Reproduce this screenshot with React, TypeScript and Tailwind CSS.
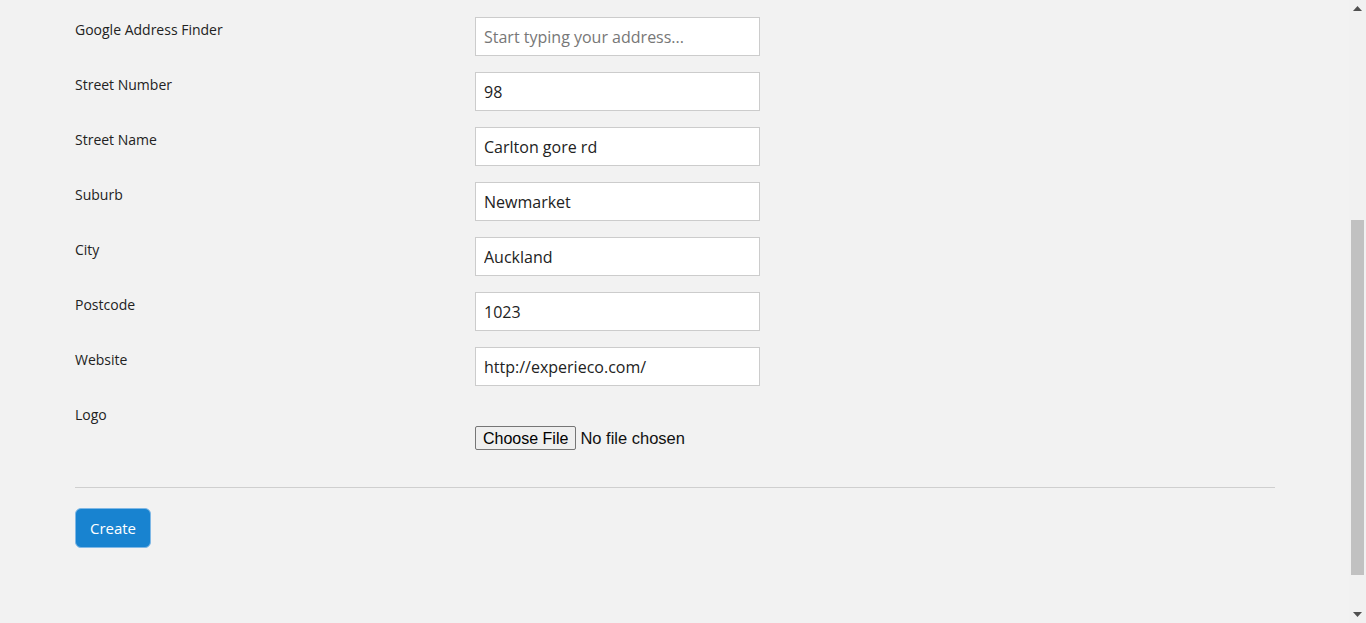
import React from "react";

const fields = [
  { label: "Google Address Finder", value: "", placeholder: "Start typing your address..." },
  { label: "Street Number", value: "98" },
  { label: "Street Name", value: "Carlton gore rd" },
  { label: "Suburb", value: "Newmarket" },
  { label: "City", value: "Auckland" },
  { label: "Postcode", value: "1023" },
  { label: "Website", value: "http://experieco.com/" },
];

function Scrollbar() {
  return (
    <div className="w-[17px] h-full bg-[#f1f1f1] flex flex-col items-center">
      <div className="h-[17px] flex items-center justify-center">
        <svg width="9" height="5" viewBox="0 0 9 5">
          <path d="M0 5 L4.5 0 L9 5 Z" fill="#505050" />
        </svg>
      </div>
      <div className="flex-1 w-full px-[2px] pt-[203px] pb-[31px]">
        <div className="h-full bg-[#c1c1c1]" />
      </div>
      <div className="h-[17px] flex items-center justify-center">
        <svg width="9" height="5" viewBox="0 0 9 5">
          <path d="M0 0 L4.5 5 L9 0 Z" fill="#505050" />
        </svg>
      </div>
    </div>
  );
}

export default function App() {
  return (
    <div className="h-[623px] w-full flex bg-[#f2f2f2] overflow-hidden font-['Open_Sans',sans-serif] text-[#333]">
      <div className="flex-1 pl-[75px] pt-[17px]">
        <form className="w-[1200px]" onSubmit={(e) => e.preventDefault()}>
          {fields.map((f) => (
            <div key={f.label} className="flex mb-[16px]">
              <label className="w-[400px] pt-[3px] text-[14px] leading-[20px] text-[#222]">{f.label}</label>
              <input
                type="text"
                defaultValue={f.value}
                placeholder={f.placeholder}
                className="w-[285px] h-[39px] px-[8px] bg-white border border-[#ccc] text-[16px] text-[#222] placeholder:text-[#777] outline-none"
              />
            </div>
          ))}

          {/* logo upload */}
          <div className="flex">
            <label className="w-[400px] pt-[3px] text-[14px] leading-[20px] text-[#222]">Logo</label>
            <div className="pt-[24px]">
              <input
                type="file"
                className="font-['Liberation_Sans',Arial,sans-serif] text-[16.5px] text-[#111] file:mr-[4px] file:h-[24px] file:px-[7px] file:border file:border-solid file:border-[#767676] file:bg-[#efefef] file:rounded-[2px] file:text-black file:text-[16px]"
              />
            </div>
          </div>

          <div className="mt-[36px] border-t border-[#cfcfcf]" />

          <div className="pt-[20px]">
            <button
              type="submit"
              className="w-[76px] h-[40px] rounded-[6px] bg-[#1883d0] border border-[#7fb8e6] text-white text-[15px] font-medium"
            >
              Create
            </button>
          </div>
        </form>
      </div>
      <Scrollbar />
    </div>
  );
}
